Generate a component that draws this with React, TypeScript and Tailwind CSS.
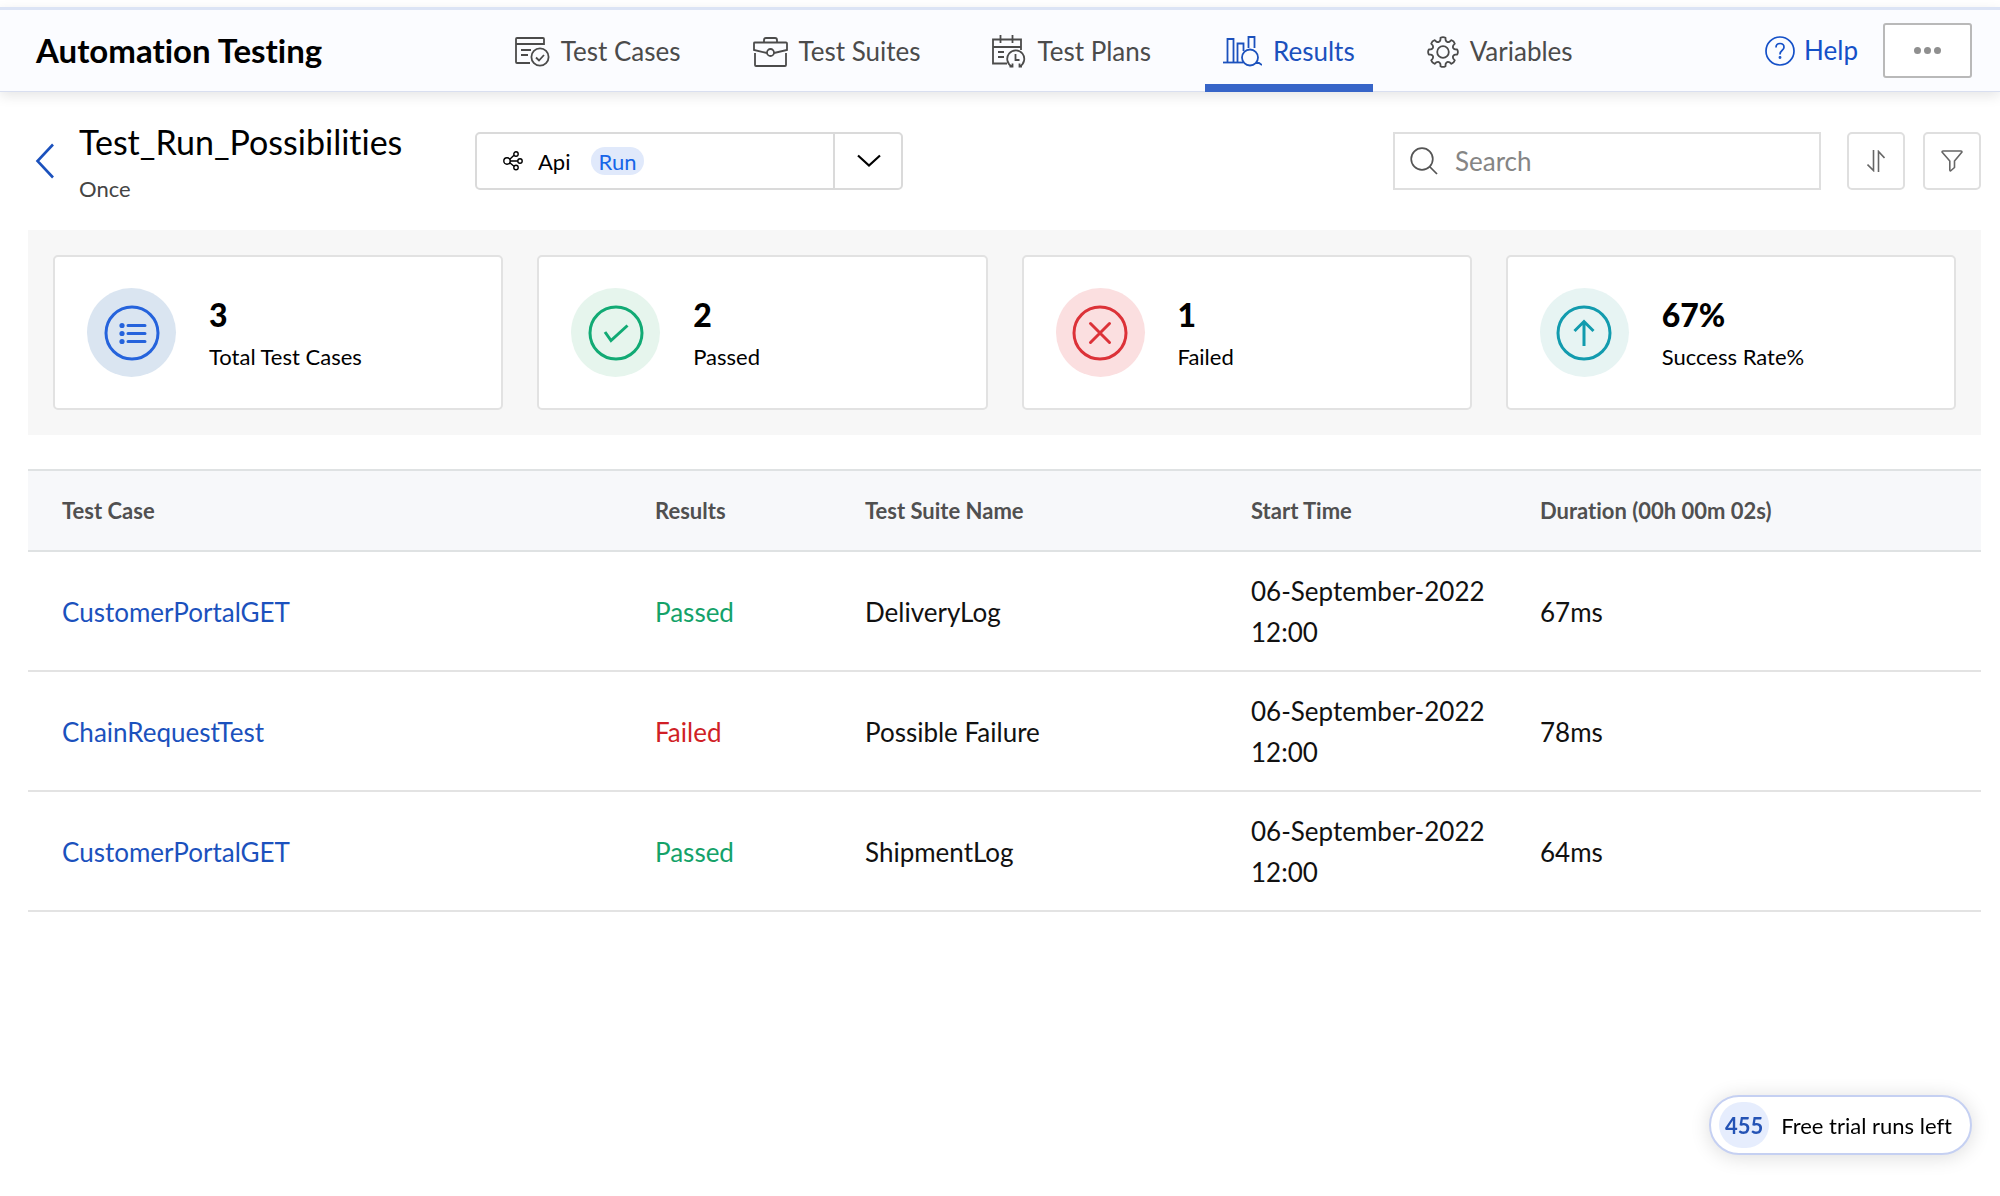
import { useState } from "react";
import clsx from "clsx";

type IconProps = React.SVGProps<SVGSVGElement>;

const TestCasesIcon = (props: IconProps) => (
  <svg width="35" height="30" viewBox="0 0 35 30" fill="none" stroke="currentColor" strokeWidth="1.8" {...props}>
    <path d="M29 8V2Q29 1 28 1H2Q1 1 1 2V25Q1 26 2 26H15" />
    <path d="M1 7H29M6 13H16M6 18H13" />
    <circle cx="25" cy="20" r="8.6" />
    <path d="M21 20.5L24 23.5L29 18" />
  </svg>
);

const TestSuitesIcon = (props: IconProps) => (
  <svg width="35" height="30" viewBox="0 0 35 30" fill="none" stroke="currentColor" strokeWidth="1.8" {...props}>
    <path d="M11 5V3Q11 1 13 1H22Q24 1 24 3V5" />
    <path d="M14 16L1 13V6Q1 5.5 2 5.5H33Q34 5.5 34 6.5V13L21 16" />
    <path d="M2 16V28Q2 29 3 29H32Q33 29 33 28V16" />
    <circle cx="17.5" cy="15.5" r="3.5" />
  </svg>
);

const TestPlansIcon = (props: IconProps) => (
  <svg width="34" height="33" viewBox="0 0 34 33" fill="none" stroke="currentColor" strokeWidth="1.8" {...props}>
    <path d="M15 28.5H1V4.5H29V15" />
    <path d="M1 12H29M8.5 0V8M20.5 0V8" />
    <path d="M6 17H12M6 22H12" />
    <path d="M20 31.5A8.5 8.5 0 1 1 27.5 31.5" />
    <path d="M20.5 28.5V31.5H17.5M27.5 28.5V31.5H30" />
    <path d="M23.5 19V25H27.5" />
  </svg>
);

const ResultsIcon = (props: IconProps) => (
  <svg width="39" height="31" viewBox="0 0 39 31" fill="none" stroke="currentColor" strokeWidth="1.8" {...props}>
    <path d="M0 26.5H20" />
    <path d="M4.5 26V3H10.5V26M14.5 26V7.5H20.5V15" />
    <path d="M25.5 12V1H31.5V12" />
    <circle cx="27" cy="21.5" r="8" />
    <path d="M33 27H36L39 29" />
  </svg>
);

// eight-toothed cog, one 45 degree segment per tooth
const cogPath = () => {
  const point = (deg: number, r: number) => {
    const a = (deg * Math.PI) / 180;
    return `${(16 + r * Math.sin(a)).toFixed(2)} ${(16 - r * Math.cos(a)).toFixed(2)}`;
  };
  let d = "";
  for (let i = 0; i < 8; i++) {
    const c = i * 45;
    d += `${i === 0 ? "M" : "L"}${point(c - 10, 14.4)}`;
    d += `Q${point(c, 15.6)} ${point(c + 10, 14.4)}`;
    d += `L${point(c + 12, 12.4)}`;
    d += `Q${point(c + 22.5, 9.6)} ${point(c + 33, 12.4)}`;
  }
  return d + "Z";
};

const VariablesIcon = (props: IconProps) => (
  <svg width="32" height="32" viewBox="0 0 32 32" fill="none" stroke="currentColor" strokeWidth="1.8" strokeLinejoin="round" {...props}>
    <path d={cogPath()} />
    <circle cx="16" cy="16" r="5.8" />
  </svg>
);

const HelpIcon = () => (
  <svg width="30" height="30" viewBox="0 0 30 30" fill="none" stroke="currentColor" strokeWidth="1.7">
    <circle cx="15" cy="15" r="14" />
    <path d="M11 11.5Q11 7.5 15 7.5Q19 7.5 19 11.2Q19 13 17 14.5Q15 16 15 18.5" />
    <circle cx="15" cy="21.5" r="0.6" fill="currentColor" />
  </svg>
);

const ShareIcon = (props: IconProps) => (
  <svg width="20" height="20" viewBox="0 0 20 20" fill="none" stroke="currentColor" strokeWidth="1.4" {...props}>
    <circle cx="4" cy="10" r="3.2" />
    <circle cx="13" cy="3" r="2.2" />
    <circle cx="17" cy="10" r="2.2" />
    <circle cx="13" cy="16.5" r="2.2" />
    <path d="M6.8 8.3L11 4.3M7.2 10H14.8M6.8 11.7L11 15.3" />
  </svg>
);

const tabs = [
  { name: "Test Cases", icon: TestCasesIcon },
  { name: "Test Suites", icon: TestSuitesIcon },
  { name: "Test Plans", icon: TestPlansIcon },
  { name: "Results", icon: ResultsIcon },
  { name: "Variables", icon: VariablesIcon },
];

const stats = [
  {
    value: "3",
    label: "Total Test Cases",
    circle: "bg-[#dae5f1] text-[#2563dc]",
    glyph: (
      <>
        <path d="M24 20.5H41M24 28.5H41M24 36.5H41" strokeLinecap="round" />
        <g fill="currentColor" stroke="none">
          <circle cx="18" cy="20.5" r="2.6" />
          <circle cx="18" cy="28.5" r="2.6" />
          <circle cx="18" cy="36.5" r="2.6" />
        </g>
      </>
    ),
  },
  {
    value: "2",
    label: "Passed",
    circle: "bg-[#e6f5ed] text-[#11aa74]",
    glyph: <path d="M17 27L23 35.5L39.5 20.5" />,
  },
  {
    value: "1",
    label: "Failed",
    circle: "bg-[#fbdfe0] text-[#dc3238]",
    glyph: <path d="M18.5 18.5L37.5 37.5M37.5 18.5L18.5 37.5" strokeLinecap="round" />,
  },
  {
    value: "67%",
    label: "Success Rate%",
    circle: "bg-[#e7f4f3] text-[#129bae]",
    glyph: <path d="M28 41V16.5M18.5 26L28 16.5L37.5 26" />,
  },
];

const results = [
  { testCase: "CustomerPortalGET", result: "Passed", suite: "DeliveryLog", start: "06-September-2022 12:00", duration: "67ms" },
  { testCase: "ChainRequestTest", result: "Failed", suite: "Possible Failure", start: "06-September-2022 12:00", duration: "78ms" },
  { testCase: "CustomerPortalGET", result: "Passed", suite: "ShipmentLog", start: "06-September-2022 12:00", duration: "64ms" },
];

const Header = () => {
  const [active, setActive] = useState("Results");

  return (
    <header className="mt-[7px] flex h-[85px] items-center border-t-3 border-b border-t-[#dce4f5] border-b-[#d9dff0] bg-[#fbfcff] pr-7 pl-9 shadow-[0_4px_12px_rgba(0,0,0,0.1)]">
      <h1 className="text-[33px] font-bold whitespace-nowrap">Automation Testing</h1>
      <nav className="mx-auto flex gap-9 self-stretch">
        {tabs.map(({ name, icon: Icon }) => (
          <a
            key={name}
            href="#"
            onClick={() => setActive(name)}
            className={clsx(
              "relative flex items-center gap-[11px] px-[18px] pt-0.5 text-[26px] whitespace-nowrap",
              active === name ? "text-[#1b51bd]" : "text-[#4b4b4b]"
            )}
          >
            <Icon className="shrink-0" />
            {name}
            {active === name && (
              <span className="absolute inset-x-0 -bottom-px h-2 bg-[#3765c8]" />
            )}
          </a>
        ))}
      </nav>
      <a href="#" className="flex items-center gap-[9px] text-[26px] text-[#1450c8]">
        <HelpIcon />
        Help
      </a>
      <button
        type="button"
        aria-label="More options"
        className="ml-[25px] flex h-[55px] w-[89px] items-center justify-center gap-[3px] rounded-[3px] border-2 border-[#b9b9b9] bg-white"
      >
        <span className="size-[7px] rounded-full bg-[#8f8f8f]" />
        <span className="size-[7px] rounded-full bg-[#8f8f8f]" />
        <span className="size-[7px] rounded-full bg-[#8f8f8f]" />
      </button>
    </header>
  );
};

const Toolbar = () => (
  <div className="flex h-[138px] items-center pr-[19px] pl-[35px]">
    <a href="#" aria-label="Back" className="text-[#1b51bd]">
      <svg width="20" height="36" viewBox="0 0 20 36" fill="none" stroke="currentColor" strokeWidth="2.6">
        <path d="M18 1.5L2.5 18L18 34.5" />
      </svg>
    </a>
    <div className="ml-6 w-[396px] pt-2.5">
      <h2 className="text-[34px] leading-[46px]">Test_Run_Possibilities</h2>
      <p className="text-[22px] leading-[48px] text-[#444]">Once</p>
    </div>

    <div className="relative h-[58px] w-[428px]">
      <select
        aria-label="Test run type"
        className="size-full appearance-none rounded-[5px] border-2 border-[#dadada] bg-white pl-[61px] text-[22px]"
      >
        <option>Api</option>
      </select>
      <ShareIcon className="pointer-events-none absolute top-[19px] left-7" />
      <span className="pointer-events-none absolute top-[15px] left-[116px] flex h-7 w-[53px] items-center justify-center rounded-full bg-[#e0e9fb] text-[22px] text-[#1765e8]">
        Run
      </span>
      <span className="pointer-events-none absolute inset-y-0 right-0 flex w-[70px] items-center justify-center border-l-2 border-[#dadada]">
        <svg width="24" height="14" viewBox="0 0 24 14" fill="none" stroke="black" strokeWidth="2.2">
          <path d="M1 1.5L12 11.5L23 1.5" />
        </svg>
      </span>
    </div>

    <label className="ml-auto flex h-[58px] w-[428px] items-center gap-[17px] border-2 border-[#dfdfdf] bg-white pl-[15px]">
      <svg width="28" height="28" viewBox="0 0 28 28" fill="none" stroke="#555" strokeWidth="1.7">
        <circle cx="12" cy="12" r="10.8" />
        <path d="M19.5 19.5L27 27" />
      </svg>
      <input
        type="search"
        aria-label="Search"
        placeholder="Search"
        className="min-w-0 flex-1 bg-transparent text-[26px] outline-none placeholder:text-[#858585]"
      />
    </label>
    <button
      type="button"
      aria-label="Sort"
      className="ml-[26px] flex h-[58px] w-[58px] items-center justify-center rounded-[5px] border-2 border-[#dfdfdf] bg-white"
    >
      <svg width="18" height="22" viewBox="0 0 18 22" fill="none" stroke="#666" strokeWidth="1.6">
        <path d="M6.5 0V20.5L0.5 14.5M11.5 22V1.5L17.5 8" />
      </svg>
    </button>
    <button
      type="button"
      aria-label="Filter"
      className="ml-[18px] flex h-[58px] w-[58px] items-center justify-center rounded-[5px] border-2 border-[#dfdfdf] bg-white"
    >
      <svg width="22" height="22" viewBox="0 0 22 22" fill="none" stroke="#666" strokeWidth="1.6" strokeLinejoin="round">
        <path d="M1 2Q1 1 2 1H20Q21 1 21 2L13.5 11V17.5L9.5 21Q8.8 21 8.8 20V11Z" />
      </svg>
    </button>
  </div>
);

const StatCards = () => (
  <section className="grid grid-cols-4 gap-[34px] bg-[#f7f7f7] p-[25px]">
    {stats.map(({ value, label, circle, glyph }) => (
      <div key={label} className="flex h-[155px] items-center gap-[33px] rounded-[5px] border-2 border-[#e2e2e2] bg-white pl-8">
        <div className={clsx("flex size-[89px] shrink-0 items-center justify-center rounded-full", circle)}>
          <svg width="56" height="56" viewBox="0 0 56 56" fill="none" stroke="currentColor" strokeWidth="3">
            <circle cx="28" cy="28" r="26" />
            {glyph}
          </svg>
        </div>
        <div className="pt-1.5">
          <p className="text-[32px] leading-[42px] font-black">{value}</p>
          <p className="text-[22px] leading-[42px]">{label}</p>
        </div>
      </div>
    ))}
  </section>
);

const ResultsTable = () => (
  <table className="mt-[34px] w-full table-fixed text-left">
    <colgroup>
      <col className="w-[593px]" />
      <col className="w-[210px]" />
      <col className="w-[386px]" />
      <col className="w-[289px]" />
      <col />
    </colgroup>
    <thead>
      <tr className="h-[81px] border-y-2 border-[#dfe2e3] bg-[#f7f8fa] text-[22px] text-[#505050]">
        <th className="pl-[34px] font-bold">Test Case</th>
        <th className="pl-[34px] font-bold">Results</th>
        <th className="pl-[34px] font-bold">Test Suite Name</th>
        <th className="pl-[34px] font-bold">Start Time</th>
        <th className="pl-[34px] font-bold">Duration (00h 00m 02s)</th>
      </tr>
    </thead>
    <tbody>
      {results.map((row, index) => (
        <tr key={index} className="h-[120px] border-b-2 border-[#e3e3e3] text-[26px] leading-[41px] text-[#111]">
          <td className="pt-0.5 pl-[34px]">
            <a href="#" className="text-[#1b51bd]">
              {row.testCase}
            </a>
          </td>
          <td className={clsx("pt-0.5 pl-[34px]", row.result === "Passed" ? "text-[#14a269]" : "text-[#d01f26]")}>
            {row.result}
          </td>
          <td className="pt-0.5 pl-[34px]">{row.suite}</td>
          <td className="pt-0.5 pl-[34px]">{row.start}</td>
          <td className="pt-0.5 pl-[34px]">{row.duration}</td>
        </tr>
      ))}
    </tbody>
  </table>
);

const App = () => (
  <div className="flow-root min-h-screen bg-white font-['Lato',sans-serif] text-black [font-variant-ligatures:none]">
    <Header />
    <Toolbar />
    <main className="pr-[19px] pl-7">
      <StatCards />
      <ResultsTable />
    </main>
    <div className="fixed right-7 bottom-[41px] flex h-[60px] items-center gap-3 rounded-full border-2 border-[#c5d0f2] bg-white pr-[18px] pl-2 shadow-[0_2px_20px_rgba(0,0,0,0.14)]">
      <span className="flex h-[46px] w-[50px] items-center justify-center rounded-full bg-[#e6edfd] text-[22px] font-bold text-[#2453b5]">
        455
      </span>
      <span className="text-[22px]">Free trial runs left</span>
    </div>
  </div>
);

export default App;
